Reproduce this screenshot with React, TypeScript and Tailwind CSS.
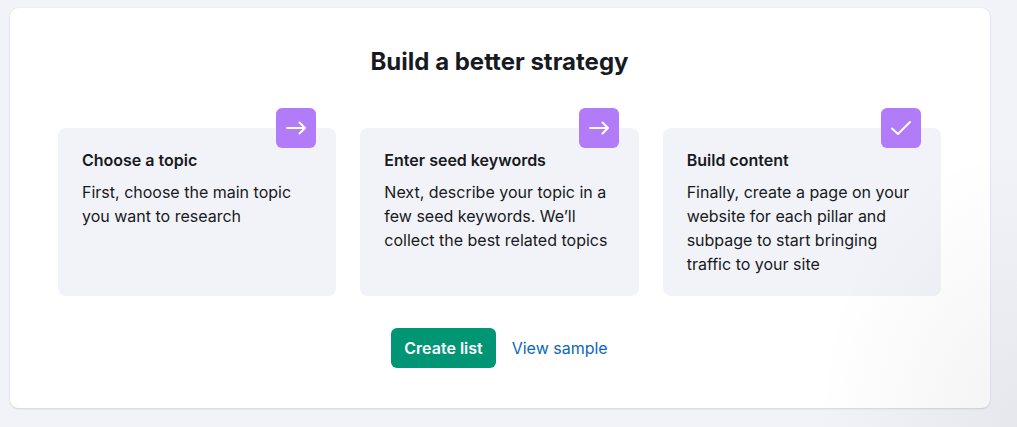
import { ReactNode } from "react";

const ArrowIcon = () => (
  <svg className="size-6" viewBox="0 0 24 24" fill="none" stroke="currentColor" strokeWidth="2" strokeLinecap="round" strokeLinejoin="round" aria-hidden="true">
    <path d="M3 12h18M15.5 6.5L21 12l-5.5 5.5" />
  </svg>
);

const CheckIcon = () => (
  <svg className="size-6" viewBox="0 0 24 24" fill="none" stroke="currentColor" strokeWidth="2" strokeLinecap="round" strokeLinejoin="round" aria-hidden="true">
    <path d="M3 12.5l6 5.5L21 6" />
  </svg>
);

const steps: { title: string; text: string; icon: ReactNode }[] = [
  { title: "Choose a topic", text: "First, choose the main topic you want to research", icon: <ArrowIcon /> },
  { title: "Enter seed keywords", text: "Next, describe your topic in a few seed keywords. We’ll collect the best related topics", icon: <ArrowIcon /> },
  { title: "Build content", text: "Finally, create a page on your website for each pillar and subpage to start bringing traffic to your site", icon: <CheckIcon /> },
];

export default function App() {
  return (
    <div className="relative min-h-screen bg-[#f2f3f8] pt-2 pr-[27px] pb-[19px] pl-[10px] font-['Inter',sans-serif] text-[#171a22]">
      <main className="rounded-lg bg-white pt-[38px] pr-[49px] pb-10 pl-12 shadow-[0_0_1px_rgba(25,27,35,0.16),0_1px_2px_rgba(25,27,35,0.12)]">
        <h1 className="text-center text-2xl font-bold">Build a better strategy</h1>
        <ol className="mt-[50px] grid grid-cols-3 gap-6">
          {steps.map((step) => (
            <li key={step.title} className="relative rounded-lg bg-[#f2f3f8] px-6 py-5">
              <span className="absolute -top-5 right-5 flex size-10 items-center justify-center rounded-md bg-[#b27bf8] text-white">{step.icon}</span>
              <h2 className="font-semibold">{step.title}</h2>
              <p className="mt-2">{step.text}</p>
            </li>
          ))}
        </ol>
        <div className="mt-8 flex items-center justify-center gap-4">
          <button type="button" className="h-10 rounded-md bg-[#009575] px-[13px] font-semibold text-white">Create list</button>
          <a href="#sample" className="text-[#0b68b9]">View sample</a>
        </div>
      </main>
      <div aria-hidden="true" className="pointer-events-none absolute inset-0 bg-[radial-gradient(ellipse_200px_280px_at_100%_100%,rgba(20,20,30,0.05),transparent)]" />
    </div>
  );
}
